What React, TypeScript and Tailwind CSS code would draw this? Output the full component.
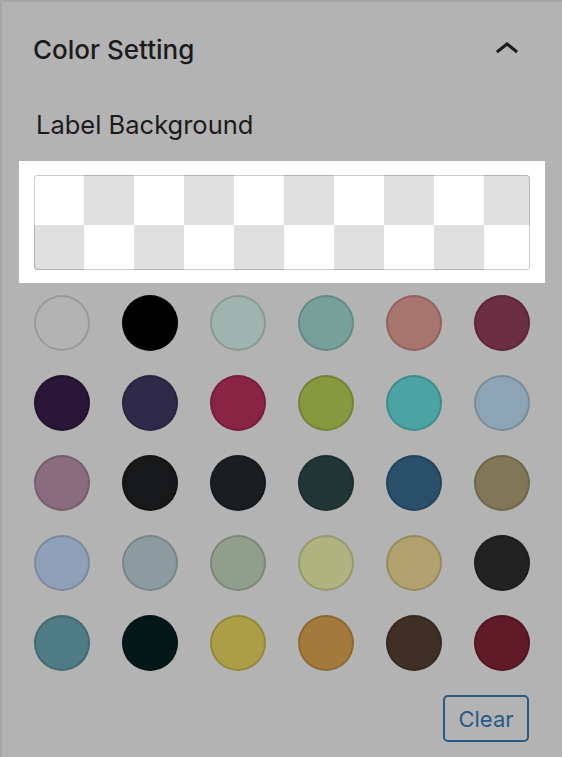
import React from "react";

const swatches: string[] = [
  "transparent", "#000000", "#a0b4af", "#77a09b", "#a8756e", "#6b2e42",
  "#2a1637", "#302a4a", "#8a2444", "#87993f", "#4ba3a4", "#8ca4b3",
  "#8a6c7f", "#171819", "#1a1e21", "#233637", "#2a4f6b", "#817757",
  "#8fa0b8", "#8c9ba0", "#909e8b", "#aeb37f", "#b0a16f", "#222222",
  "#4f7b84", "#051819", "#ac9e46", "#a47a3c", "#402f25", "#611a27",
];

function ChevronUp() {
  return (
    <svg width="48" height="48" viewBox="0 0 24 24" className="-mr-px shrink-0" aria-hidden="true">
      <path d="M6.5 12.4L12 8l5.5 4.4-.9 1.2L12 10l-4.6 3.6-1-1.2z" fill="#1b1b1b" />
    </svg>
  );
}

export default function App() {
  return (
    <div className="w-[562px] h-[757px] bg-[#b3b3b3] border-l-2 border-t-2 border-[#a6a6a6] pl-[32px] pr-[32px] pt-[24px] flex flex-col font-['Inter',sans-serif] text-[#1b1b1b] overflow-hidden">
      <div className="h-[48px] flex items-center justify-between">
        <h2 className="-ml-px text-[26px] leading-[32px] font-medium">Color Setting</h2>
        <ChevronUp />
      </div>

      <div className="mt-[35px] ml-[2px] text-[25.5px] leading-[32px]">Label Background</div>

      <div className="mt-[20px] -mx-[15px] px-[15px] pt-[14px] pb-[13px] bg-white">
        <div className="h-[95px] rounded-[4px] border border-black/20 bg-origin-border bg-[length:100px_100px] bg-[conic-gradient(#e0e0e0_25%,#ffffff_0_50%,#e0e0e0_0_75%,#ffffff_0)]" />
      </div>

      <div className="mt-[12px] grid grid-cols-6 gap-x-[32px] gap-y-[24px]">
        {swatches.map((c, i) => (
          <button
            key={i}
            type="button"
            aria-label={`Color ${i + 1}`}
            className="w-[56px] h-[56px] rounded-full shadow-[inset_0_0_0_2px_rgba(0,0,0,0.14)]"
            style={{ backgroundColor: c }}
          />
        ))}
      </div>

      <button
        type="button"
        className="mt-[24px] mr-px self-end w-[86px] h-[47px] rounded-[5px] border-2 border-[#265b86] text-[#265b86] text-[22px] leading-none flex items-center justify-center"
      >
        Clear
      </button>
    </div>
  );
}
